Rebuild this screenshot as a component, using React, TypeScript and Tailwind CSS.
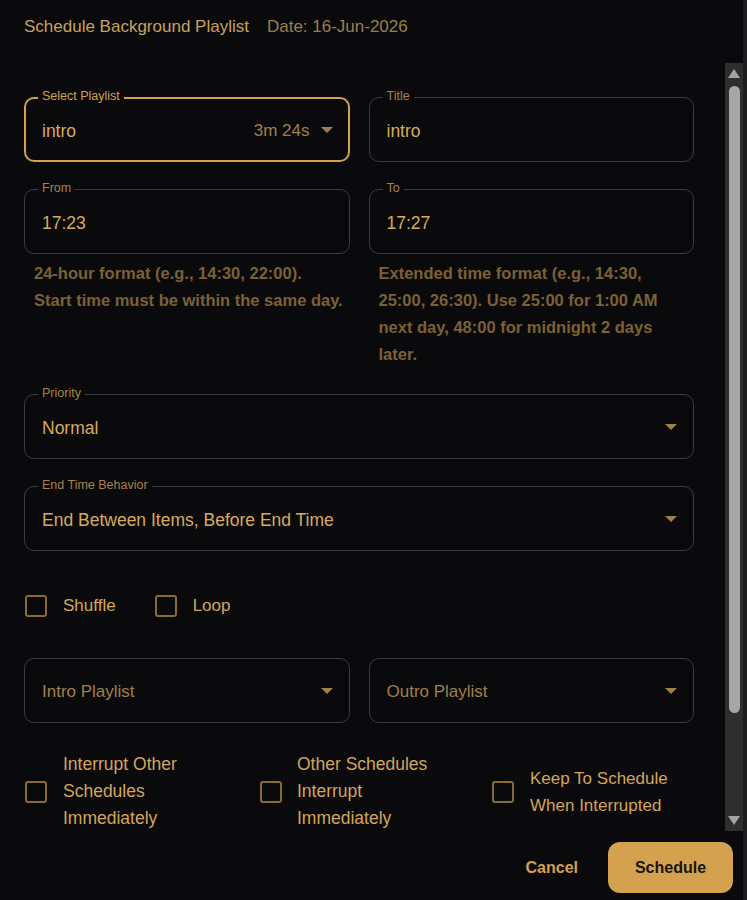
import React from "react";

function Arrow({ color = "#a08049" }: { color?: string }) {
  return (
    <svg width="12" height="6" viewBox="0 0 12 6" className="shrink-0">
      <polygon points="0,0 12,0 6,6" fill={color} />
    </svg>
  );
}

function Field({
  label,
  value,
  focused,
  muted,
  extra,
  select,
}: {
  label?: string;
  value: string;
  focused?: boolean;
  muted?: boolean;
  extra?: string;
  select?: boolean;
}) {
  return (
    <div
      className={
        focused
          ? "relative h-[65px] rounded-[10px] border-2 border-[#d4a24c] flex items-center pl-[16px] pr-[15px]"
          : "relative h-[65px] rounded-[10px] border border-[#3d3d3f] flex items-center pl-[17px] pr-[16px]"
      }
    >
      {label && (
        <span
          className={
            focused
              ? "absolute top-[-10px] left-[12px] px-[4px] bg-[#0a0a0c] text-[12.5px] leading-[14px] text-[#d4a24c]"
              : "absolute top-[-9px] left-[13px] px-[4px] bg-[#0a0a0c] text-[12.5px] leading-[14px] text-[#a3834b]"
          }
        >
          {label}
        </span>
      )}
      <span
        className={
          muted
            ? "flex-1 pt-[3px] text-[17px] text-[#a08049]"
            : "flex-1 pt-[3px] text-[17.5px] text-[#d8aa5e]"
        }
      >
        {value}
      </span>
      {extra && <span className="pt-[3px] text-[17px] text-[#a08049] mr-[11px]">{extra}</span>}
      {select && <Arrow />}
    </div>
  );
}

function Box() {
  return <div className="w-[22px] h-[22px] shrink-0 rounded-[3px] border-2 border-[#8a6b36]" />;
}

export default function App() {
  return (
    <div className="w-[747px] h-[900px] bg-[#0a0a0c] flex font-['Liberation_Sans',Arial,sans-serif] overflow-hidden">
      <div className="w-[743px] flex flex-col">
        {/* header */}
        <div className="h-[63px] shrink-0 flex items-start pl-[24px] pt-[17px] gap-[18px] text-[17px] leading-[20px]">
          <span className="text-[#c9a15c]">Schedule Background Playlist</span>
          <span className="text-[#9b804e]">Date: 16-Jun-2026</span>
        </div>

        {/* body */}
        <div className="h-[768px] shrink-0 flex">
          <div className="w-[725px] overflow-hidden pl-[24px] pt-[34px]">
            <div className="w-[670px] flex flex-col">
              <div className="grid grid-cols-2 gap-x-[19px]">
                <Field label="Select Playlist" value="intro" focused extra="3m 24s" select />
                <Field label="Title" value="intro" />
              </div>

              <div className="grid grid-cols-2 gap-x-[19px] mt-[27px]">
                <div className="flex flex-col">
                  <Field label="From" value="17:23" />
                  <p className="mt-[6px] pl-[10px] text-[16.5px] leading-[27px] font-bold text-[#7b6133]">
                    24-hour format (e.g., 14:30, 22:00).
                    <br />
                    Start time must be within the same day.
                  </p>
                </div>
                <div className="flex flex-col">
                  <Field label="To" value="17:27" />
                  <p className="mt-[6px] pl-[10px] text-[16.5px] leading-[27px] font-bold text-[#7b6133] whitespace-nowrap">
                    Extended time format (e.g., 14:30,
                    <br />
                    25:00, 26:30). Use 25:00 for 1:00 AM
                    <br />
                    next day, 48:00 for midnight 2 days
                    <br />
                    later.
                  </p>
                </div>
              </div>

              <div className="mt-[26px]">
                <Field label="Priority" value="Normal" select />
              </div>
              <div className="mt-[27px]">
                <Field label="End Time Behavior" value="End Between Items, Before End Time" select />
              </div>

              <div className="mt-[41px] h-[27px] flex items-center pl-[1px] gap-[39px] text-[17px] text-[#d4a55a]">
                <div className="flex items-center gap-[16px]">
                  <Box />
                  <span className="pt-[1px]">Shuffle</span>
                </div>
                <div className="flex items-center gap-[16px]">
                  <Box />
                  <span className="pt-[1px]">Loop</span>
                </div>
              </div>

              <div className="grid grid-cols-2 gap-x-[19px] mt-[39px]">
                <Field value="Intro Playlist" muted select />
                <Field value="Outro Playlist" muted select />
              </div>

              <div className="mt-[28px] flex text-[17.5px] leading-[27px] text-[#d4a55a] pb-[60px] whitespace-nowrap">
                <div className="w-[235px] flex items-center gap-[16px] pl-[1px]">
                  <Box />
                  <span>
                    Interrupt Other
                    <br />
                    Schedules
                    <br />
                    Immediately
                  </span>
                </div>
                <div className="w-[233px] flex items-center gap-[15px] pl-[1px]">
                  <Box />
                  <span>
                    Other Schedules
                    <br />
                    Interrupt
                    <br />
                    Immediately
                  </span>
                </div>
                <div className="flex items-center gap-[16px]">
                  <Box />
                  <span className="text-[17px]">
                    Keep To Schedule
                    <br />
                    When Interrupted
                  </span>
                </div>
              </div>
            </div>
          </div>

          {/* scrollbar drawing */}
          <div className="w-[18px] bg-[#2e2e2f] flex flex-col items-center pt-[6px]">
            <svg width="12" height="9" viewBox="0 0 12 9">
              <polygon points="6,0 12,9 0,9" fill="#a3a3a3" />
            </svg>
            <div className="mt-[8px] w-[11px] h-[627px] rounded-full bg-[#a6a6a6]" />
            <div className="flex-1" />
            <svg width="12" height="9" viewBox="0 0 12 9" className="mb-[6px]">
              <polygon points="0,0 12,0 6,9" fill="#a3a3a3" />
            </svg>
          </div>
        </div>

        {/* footer */}
        <div className="flex-1 flex justify-end items-center gap-[30px] pr-[10px] pt-[4px]">
          <button className="text-[16px] font-bold text-[#d4a04f]">Cancel</button>
          <button className="h-[51px] w-[125px] rounded-[12px] bg-[#d4a24f] text-[16px] font-bold text-[#1a1409]">
            Schedule
          </button>
        </div>
      </div>
      <div className="w-[4px] bg-[#1d1d20]" />
    </div>
  );
}
